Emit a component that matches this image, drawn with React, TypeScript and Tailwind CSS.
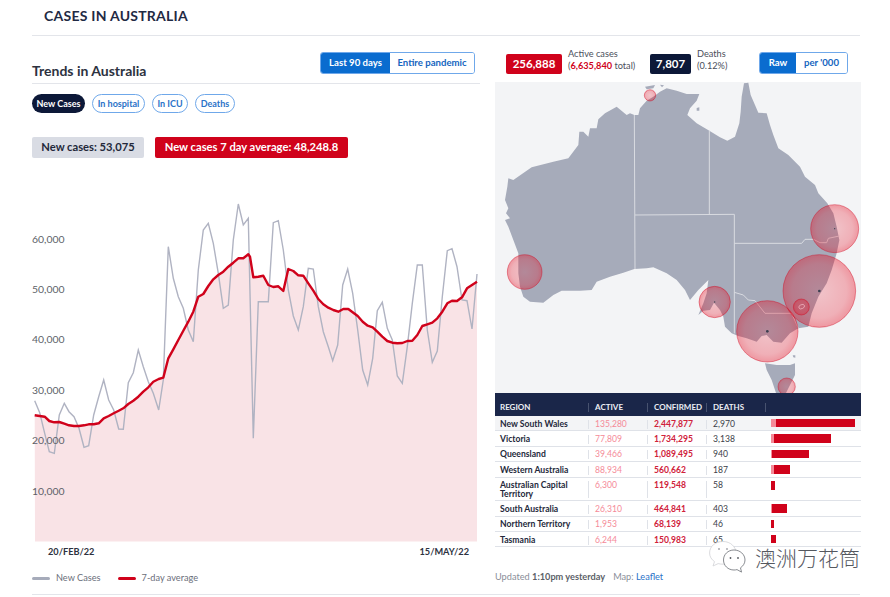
import React from 'react';

const font = { fontFamily: '"Lato", "Noto Sans", sans-serif' };

const grayA = [[44,632],[59,668],[74,730],[88,785],[103,790],[118,675],[133,640],[147,665],[162,680],[177,715],[192,772],[206,767],[221,675],[236,620],[251,570],[266,630],[281,660],[296,717],[310,718],[325,578],[340,548],[355,480],[370,530],[385,575],[400,610],[416,660],[430,570],[445,170],[460,265],[475,320],[490,355],[505,420],[520,455],[535,240],[550,120],[565,100],[580,160],[595,250],[610,355],[625,345],[640,150],[655,42],[670,105],[685,85]];
const grayB = [[10,745],[25,335],[55,335],[70,98],[85,92],[100,180],[115,300],[130,378],[145,420],[160,350],[175,235],[190,237],[205,350],[220,425],[235,470],[248,512],[263,465],[278,285],[293,237],[308,310],[323,420],[338,540],[353,585],[368,505],[382,362],[397,337],[412,415],[427,450],[442,558],[457,580],[472,470],[487,340],[502,225],[517,225],[532,420],[547,517],[562,483],[577,320],[592,182],[606,176],[621,230],[636,330],[651,332],[666,417],[681,252]];
const redA = [[44,676],[59,678],[74,680],[88,693],[103,697],[118,696],[133,701],[147,706],[162,708],[177,708],[192,706],[206,703],[221,703],[236,700],[251,685],[266,678],[281,670],[296,662],[310,655],[325,642],[340,632],[355,620],[370,605],[385,592],[400,575],[416,567],[430,563],[445,505],[460,478],[475,450],[490,422],[505,395],[520,365],[535,320],[550,312],[565,288],[580,268],[595,255],[610,245],[625,230],[640,218],[655,205],[670,205],[685,193]];
const redB = [[0,200],[10,262],[25,260],[40,257],[55,285],[70,291],[85,289],[100,303],[115,237],[130,243],[145,256],[160,257],[175,280],[190,302],[205,327],[220,343],[235,353],[250,360],[265,365],[280,357],[295,357],[310,368],[323,378],[338,395],[353,407],[368,412],[382,425],[397,440],[412,453],[427,458],[442,460],[457,459],[472,453],[487,452],[502,435],[517,408],[532,403],[547,398],[562,385],[577,365],[592,340],[606,332],[621,333],[636,322],[651,295],[666,285],[681,275]];

// crops were read at 3x, turn them back into page pixels
const toPage = (pts: number[][], ox: number) => pts.map(([x, y]) => `${(x / 3 + ox).toFixed(1)},${(y / 3 + 190).toFixed(1)}`);
const grayLine = [...toPage(grayA, 20), ...toPage(grayB, 250)].join(' ');
const redPts = [...toPage(redA, 20), ...toPage(redB, 250)];
const redLine = redPts.join(' ');

const yLabels = [['60,000', 242.5], ['50,000', 292.5], ['40,000', 342.5], ['30,000', 393.5], ['20,000', 443.5], ['10,000', 494.5]];

function Chart() {
  return (
    <svg viewBox="32 190 448 352" className="block h-[352px] w-[448px]">
      <polygon points={`35,541.5 ${redLine} 477,541.5`} fill="#f9e3e6" />
      <polyline points={grayLine} fill="none" stroke="#b0b3c2" strokeWidth="1.4" />
      <polyline points={redLine} fill="none" stroke="#d0021b" strokeWidth="2.4" strokeLinejoin="round" />
      {yLabels.map(([t, y]) => (
        <text key={t} x="32" y={y} fontSize="10.4" fill="#5c5f68" style={font}>{t}</text>
      ))}
    </svg>
  );
}

const mainland = '433,105 445,105 450,85 470,62 490,50 510,35 530,25 560,32 590,42 610,42 628,42 620,62 600,85 592,105 620,130 658,152 690,172 712,182 735,170 748,130 752,95 755,50 762,10 775,8 782,45 795,75 805,98 830,100 840,135 850,165 865,205 895,225 930,260 945,290 975,315 985,340 1012,370 1030,400 1040,440 1048,480 1040,520 1025,570 1010,610 985,650 965,700 955,740 925,745 900,760 875,788 850,785 830,765 815,768 800,785 770,775 745,768 725,760 705,740 700,710 690,690 672,668 660,690 640,692 625,705 640,670 650,640 655,600 625,630 600,660 585,630 560,600 530,580 490,562 470,565 433,567 400,578 360,590 320,605 305,630 270,632 215,632 190,645 160,668 120,665 100,650 90,620 85,580 85,520 70,480 55,440 45,420 60,415 48,400 55,385 45,360 52,320 55,295 70,300 125,262 190,245 235,235 265,195 268,155 280,155 295,170 300,145 320,145 325,118 345,100 380,80 410,105 420,100';
const tasmania = '825,850 860,855 900,855 915,850 915,885 900,915 885,945 860,945 845,900 830,870';
const bubbles = [[480,46,17],[104,576,52],[674,666,47],[832,754,92],[988,633,109],[1034,446,72],[890,920,26],[934,681,24]];
const dots = [[988,633,4],[832,754,4],[1034,446,2],[674,666,2]];

function AusMap() {
  return (
    <svg viewBox="15 6 1098 933" className="block h-[311px] w-[366px] bg-[#f3f4f6]">
      <defs>
        <radialGradient id="bubble">
          <stop offset="0%" stopColor="#e70016" stopOpacity="0.2" />
          <stop offset="75%" stopColor="#e70016" stopOpacity="0.28" />
          <stop offset="100%" stopColor="#e70016" stopOpacity="0.38" />
        </radialGradient>
      </defs>
      <polygon points={mainland} fill="#a6abba" />
      <polygon points={tasmania} fill="#a6abba" />
      <polygon points="465,20 495,15 490,25 470,28" fill="#a6abba" />
      <polygon points="510,14 522,16 516,22" fill="#a6abba" />
      <polygon points="620,84 628,82 628,92 620,92" fill="#a6abba" />
      <polygon points="908,826 916,826 916,833 910,832" fill="#a6abba" />
      <g fill="none" stroke="#d9dbe1" strokeWidth="3">
        <polyline points="433,105 435,567" />
        <polyline points="435,405 733,403" />
        <polyline points="658,152 658,403" />
        <polyline points="733,403 733,760" />
        <polyline points="733,490 935,490 945,478 970,478 990,488 1010,488 1015,475 1048,468" />
        <polyline points="733,637 760,645 775,660 795,662 825,700 905,700 925,745" />
      </g>
      {bubbles.map(([cx, cy, r]) => (
        <circle key={`${cx}-${cy}`} cx={cx} cy={cy} r={r} fill="url(#bubble)" stroke="#d0021b" strokeOpacity="0.4" strokeWidth="3" />
      ))}
      {dots.map(([cx, cy, r]) => (
        <circle key={cx} cx={cx} cy={cy} r={r} fill="#3d3f50" />
      ))}
      <ellipse cx="935" cy="680" rx="9" ry="6" fill="none" stroke="#f3b8c2" strokeWidth="2" transform="rotate(-25 935 680)" />
    </svg>
  );
}

const rows = [
  { name: 'New South Wales', active: '135,280', confirmed: '2,447,877', deaths: '2,970', bar: 79, pale: 5 },
  { name: 'Victoria', active: '77,809', confirmed: '1,734,295', deaths: '3,138', bar: 57, pale: 3 },
  { name: 'Queensland', active: '39,466', confirmed: '1,089,495', deaths: '940', bar: 37, pale: 1 },
  { name: 'Western Australia', active: '88,934', confirmed: '560,662', deaths: '187', bar: 16, pale: 3 },
  { name: 'Australian Capital Territory', active: '6,300', confirmed: '119,548', deaths: '58', bar: 4, pale: 0, tall: true },
  { name: 'South Australia', active: '26,310', confirmed: '464,841', deaths: '403', bar: 15, pale: 1 },
  { name: 'Northern Territory', active: '1,953', confirmed: '68,139', deaths: '46', bar: 3, pale: 0 },
  { name: 'Tasmania', active: '6,244', confirmed: '150,983', deaths: '65', bar: 5, pale: 0 },
];

function RegionTable() {
  return (
    <div className="w-[366px] text-[8.6px] leading-[9px]">
      <div className="flex h-[23px] items-center bg-[#1a2649] pt-[5px] text-[8px] font-bold text-[#eceef4]">
        <div className="w-[93px] pl-[5px]">REGION</div>
        <div className="h-[9px] w-[59px] border-l border-[#47526f] pl-[6px]">ACTIVE</div>
        <div className="h-[9px] w-[59px] border-l border-[#47526f] pl-[6px]">CONFIRMED</div>
        <div className="h-[9px] w-[59px] border-l border-[#47526f] pl-[6px]">DEATHS</div>
        <div className="h-[9px] border-l border-[#47526f]" />
      </div>
      {rows.map((r, i) => (
        <div key={r.name} className={`flex items-center border-b border-[#dfe2e8] pt-[2px] ${r.tall ? 'h-[23.7px]' : 'h-[15.4px]'} ${i === 0 ? 'bg-[#f3f4f6]' : ''}`}>
          <div className="w-[93px] pl-[5px] pr-[2px] font-bold text-[#23283a]">{r.name}</div>
          <div className={`w-[59px] border-l border-[#dfe2e8] pl-[6px] text-[#f58a98] ${r.tall ? 'h-[17px]' : 'h-[9px]'}`}>{r.active}</div>
          <div className={`w-[59px] border-l border-[#dfe2e8] pl-[6px] font-bold text-[#d0213a] ${r.tall ? 'h-[17px]' : 'h-[9px]'}`}>{r.confirmed}</div>
          <div className={`w-[59px] border-l border-[#dfe2e8] pl-[6px] text-[#3a3d48] ${r.tall ? 'h-[17px]' : 'h-[9px]'}`}>{r.deaths}</div>
          <div className={`flex pl-[6px] ${r.tall ? 'mb-[9px]' : 'mb-[2px]'}`}>
            <div className="flex h-[8.5px]">
              {r.pale > 0 && <div className="bg-[#f58a98]" style={{ width: r.pale }} />}
              <div className="bg-[#d0021b]" style={{ width: r.bar }} />
            </div>
          </div>
        </div>
      ))}
    </div>
  );
}

function Segmented({ on, off, onW, offW }: { on: string; off: string; onW: string; offW: string }) {
  return (
    <div className="flex h-[22px] overflow-hidden rounded-[3px] border border-[#6fa8ea] text-[9.6px] font-bold">
      <div className={`flex items-center justify-center bg-[#0a6ccf] text-white ${onW}`}>{on}</div>
      <div className={`flex items-center justify-center bg-white text-[#1565c0] ${offW}`}>{off}</div>
    </div>
  );
}

export default function App() {
  return (
    <div className="relative h-[597px] w-[890px] overflow-hidden bg-white pl-[32px]" style={font}>
      <div className="h-[36px] w-[828px] border-b border-[#e3e5ea] pl-[12px] pt-[7px] text-[14px] font-bold leading-[17px] tracking-[0.25px] text-[#1f2a44]">
        CASES IN AUSTRALIA
      </div>

      <div className="flex">
        <div className="w-[448px]">
          <div className="flex h-[48px] items-end justify-between border-b border-[#e3e5ea] pb-[3px] pr-[5px]">
            <div className="translate-y-[1px] text-[14px] font-bold leading-[20px] text-[#2d3240]">Trends in Australia</div>
            <div className="mb-[6px]">
              <Segmented on="Last 90 days" off="Entire pandemic" onW="w-[69px]" offW="w-[84px]" />
            </div>
          </div>
          <div className="mt-[10px] flex gap-[7px] text-[9px] font-bold">
            <div className="flex h-[19px] w-[53px] items-center justify-center rounded-full bg-[#0c1838] text-white">New Cases</div>
            <div className="flex h-[19px] w-[53px] items-center justify-center rounded-full border border-[#6fa8ea] text-[#2a72c8]">In hospital</div>
            <div className="flex h-[19px] w-[36px] items-center justify-center rounded-full border border-[#6fa8ea] text-[#2a72c8]">In ICU</div>
            <div className="flex h-[19px] w-[40px] items-center justify-center rounded-full border border-[#6fa8ea] text-[#2a72c8]">Deaths</div>
          </div>
          <div className="mt-[24px] flex gap-[11px] text-[11.2px] font-bold">
            <div className="flex h-[21px] w-[112px] items-center justify-center rounded-[2px] bg-[#d9dce4] text-[#23283a]">New cases: 53,075</div>
            <div className="flex h-[21px] w-[193px] items-center justify-center rounded-[2px] bg-[#d0021b] text-white">New cases 7 day average: 48,248.8</div>
          </div>
          <div className="mt-[32px]">
            <Chart />
          </div>
          <div className="flex justify-between pl-[16px] pr-[11px] pt-[4px] text-[9.2px] font-bold leading-[12px] text-[#2d3240]">
            <span>20/FEB/22</span>
            <span>15/MAY/22</span>
          </div>
          <div className="mt-[14px] flex items-center text-[9.2px] leading-[12px] text-[#6a6e7a]">
            <span className="h-[3px] w-[18px] rounded-full bg-[#a6abba]" />
            <span className="ml-[6px]">New Cases</span>
            <span className="ml-[17px] h-[3px] w-[18px] rounded-full bg-[#d0021b]" />
            <span className="ml-[6px]">7-day average</span>
          </div>
        </div>

        <div className="ml-[15px] w-[366px]">
          <div className="flex h-[46px] items-center pt-[9px]">
            <div className="ml-[11px] flex h-[20px] w-[56px] items-center justify-center rounded-[2px] bg-[#d0021b] text-[11.5px] font-bold text-white">256,888</div>
            <div className="mb-[7px] ml-[6px] w-[76px] text-[9.2px] leading-[12.5px] text-[#4a4e5a]">
              <div>Active cases</div>
              <div className="whitespace-nowrap">(<span className="font-bold text-[#d0021b]">6,635,840</span> total)</div>
            </div>
            <div className="ml-[6px] flex h-[20px] w-[41px] items-center justify-center rounded-[2px] bg-[#0c1838] text-[11.5px] font-bold text-white">7,807</div>
            <div className="mb-[7px] ml-[6px] w-[40px] text-[9.2px] leading-[12.5px] text-[#4a4e5a]">
              <div>Deaths</div>
              <div>(0.12%)</div>
            </div>
            <div className="mb-[1px] ml-[22px]">
              <Segmented on="Raw" off="per '000" onW="w-[36px]" offW="w-[51px]" />
            </div>
          </div>
          <AusMap />
          <RegionTable />
          <div className="mt-[24px] text-[9.2px] leading-[12px] text-[#8a8e99]">
            Updated <span className="font-bold text-[#5c5f68]">1:10pm yesterday</span>
            <span className="ml-[8px]">Map: </span>
            <span className="text-[#2a72c8]">Leaflet</span>
          </div>
        </div>
      </div>

      <div className="absolute left-[32px] top-[594px] h-px w-[828px] bg-[#e3e5ea]" />

      {/* watermark sits on top of the table corner, hides half of the 65 */}
      <div className="absolute left-[709px] top-[541px] flex items-center">
        <svg viewBox="0 0 39 32" className="h-[32px] w-[39px]" fill="#fff" stroke="#6b6e75" strokeWidth="0.8">
          <path d="M14 .5C6 .5.6 5.500.6 12c0 3.500 1.800 6.500 4.900 8.600L4 25l5.200-2.400c1.500.4 3.200.6 4.800.6 7.500 0 13-5 13-11.200S21.500.5 14 .5Z" stroke="#d0d2d6" />
          <g transform="translate(5 0)">
            <path d="M20 9c-6 0-10.500 4.400-10.500 10S14 29 20 29c1 0 2-.1 3-.4l4.500 2.500-1-4.300C29.300 25 31 22 31 19 31 13.400 26 9 20 9Z" />
            <circle cx="16.500" cy="17" r="0.900" fill="#55585f" stroke="none" />
            <circle cx="24" cy="17" r="0.900" fill="#55585f" stroke="none" />
          </g>
          <circle cx="10" cy="8" r="0.900" fill="#a0a2a8" stroke="none" />
          <circle cx="18" cy="8" r="0.900" fill="#a0a2a8" stroke="none" />
        </svg>
        <span className="ml-[7px] text-[21px] leading-[26px] text-[#55585f]" style={{ fontFamily: '"Noto Sans CJK SC", sans-serif', fontWeight: 300 }}>澳洲万花筒</span>
      </div>
    </div>
  );
}
